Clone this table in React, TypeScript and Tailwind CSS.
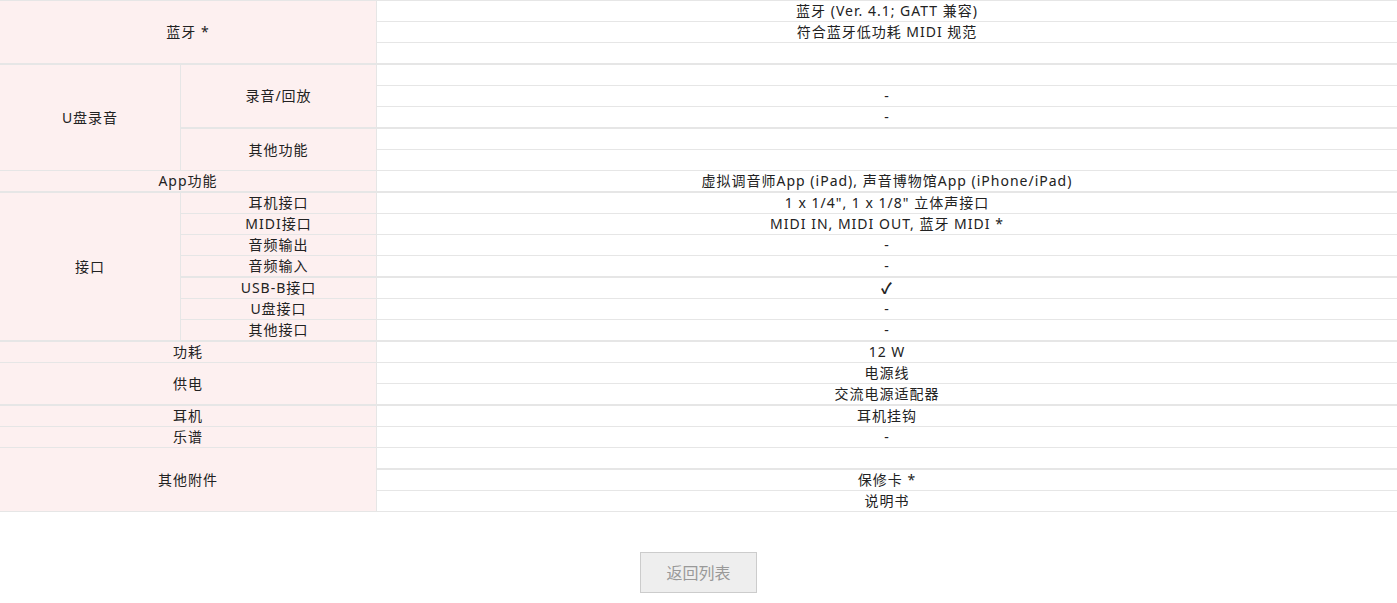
type Row = { text: string; thick?: boolean };
type Sub = { label: string; rows: Row[]; thick?: boolean };
type Group = { label: string; thick?: boolean; rows?: Row[]; subs?: Sub[] };

const SPECS: Group[] = [
  {
    label: "蓝牙 *",
    thick: true,
    rows: [{ text: "蓝牙 (Ver. 4.1; GATT 兼容)" }, { text: "符合蓝牙低功耗 MIDI 规范" }, { text: "" }],
  },
  {
    label: "U盘录音",
    subs: [
      { label: "录音/回放", thick: true, rows: [{ text: "" }, { text: "-" }, { text: "-" }] },
      { label: "其他功能", rows: [{ text: "" }, { text: "" }] },
    ],
  },
  {
    label: "App功能",
    thick: true,
    rows: [{ text: "虚拟调音师App (iPad), 声音博物馆App (iPhone/iPad)" }],
  },
  {
    label: "接口",
    thick: true,
    subs: [
      { label: "耳机接口", rows: [{ text: '1 x 1/4", 1 x 1/8" 立体声接口' }] },
      { label: "MIDI接口", rows: [{ text: "MIDI IN, MIDI OUT, 蓝牙 MIDI *" }] },
      { label: "音频输出", rows: [{ text: "-" }] },
      { label: "音频输入", thick: true, rows: [{ text: "-" }] },
      { label: "USB-B接口", rows: [{ text: "✓" }] },
      { label: "U盘接口", rows: [{ text: "-" }] },
      { label: "其他接口", rows: [{ text: "-" }] },
    ],
  },
  { label: "功耗", rows: [{ text: "12 W" }] },
  { label: "供电", thick: true, rows: [{ text: "电源线" }, { text: "交流电源适配器" }] },
  { label: "耳机", rows: [{ text: "耳机挂钩" }] },
  { label: "乐谱", rows: [{ text: "-" }] },
  {
    label: "其他附件",
    rows: [{ text: "", thick: true }, { text: "保修卡 *" }, { text: "说明书" }],
  },
];

const font = { fontFamily: '"Noto Sans", "Noto Sans CJK SC", sans-serif' };

const cell = "flex items-center justify-center overflow-hidden text-[14px] leading-[20px] tracking-[1px]";

// bottom border of the last row follows the block it closes
function ValueRows({ rows, thick }: { rows: Row[]; thick?: boolean }) {
  return (
    <div className="flex flex-1 flex-col">
      {rows.map((r, i) => {
        const isThick = i === rows.length - 1 ? thick : r.thick;
        return (
          <div
            key={i}
            className={`${cell} ${
              isThick ? "h-[22px] border-b-2" : "h-[21px] border-b"
            } border-[#e6e6e6]`}
          >
            {r.text === "✓" ? <span className="text-[15px] font-bold">✓</span> : r.text}
          </div>
        );
      })}
    </div>
  );
}

function SpecGroup({ group }: { group: Group }) {
  const labelBorder = group.thick ? "border-b-2" : "border-b";
  if (group.rows) {
    return (
      <div className="flex">
        <div className={`${cell} w-[377px] shrink-0 border-r ${labelBorder} border-[#e6e6e6] bg-[#fdf0f0]`}>
          {group.label}
        </div>
        <ValueRows rows={group.rows} thick={group.thick} />
      </div>
    );
  }

  const subs = group.subs ?? [];
  return (
    <div className="flex">
      <div className={`${cell} w-[181px] shrink-0 border-r ${labelBorder} border-[#e6e6e6] bg-[#fdf0f0]`}>
        {group.label}
      </div>
      <div className="flex flex-1 flex-col">
        {subs.map((s, i) => {
          const thick = i === subs.length - 1 ? group.thick : s.thick;
          return (
            <div key={s.label} className="flex">
              <div
                className={`${cell} w-[196px] shrink-0 border-r ${
                  thick ? "border-b-2" : "border-b"
                } border-[#e6e6e6] bg-[#fdf0f0]`}
              >
                {s.label}
              </div>
              <ValueRows rows={s.rows} thick={thick} />
            </div>
          );
        })}
      </div>
    </div>
  );
}

export default function App() {
  return (
    <div className="min-h-screen bg-white text-[#222]" style={font}>
      <div className="border-t border-[#e6e6e6]">
        {SPECS.map((g) => (
          <SpecGroup key={g.label} group={g} />
        ))}
      </div>

      <div className="flex justify-center pt-[40px]">
        <button className="h-[41px] w-[117px] border border-[#cccccc] bg-[#eeeeee] text-[16px] text-[#999999]">
          返回列表
        </button>
      </div>
    </div>
  );
}
